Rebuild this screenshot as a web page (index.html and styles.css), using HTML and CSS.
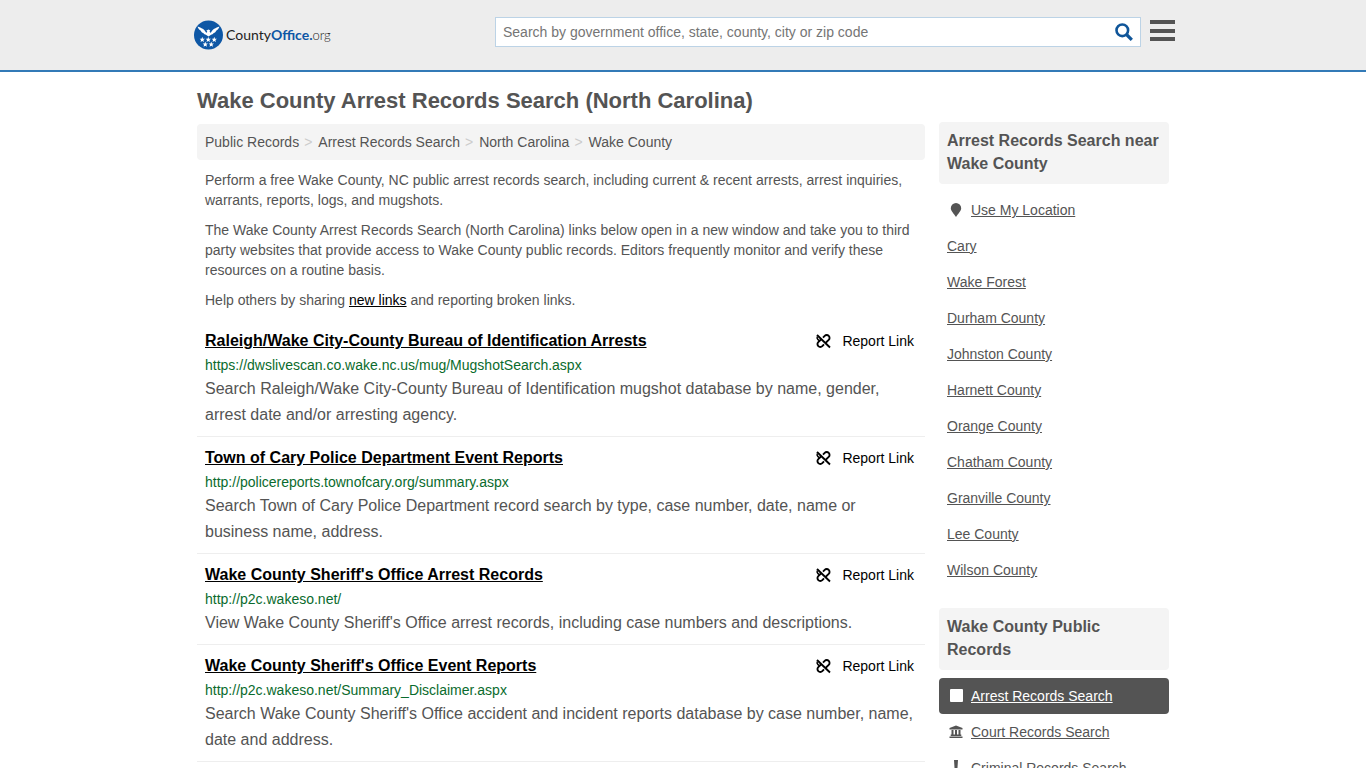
FILE: index.html
```html
<!DOCTYPE html>
<html lang="en">
<head>
<meta charset="utf-8">
<meta name="viewport" content="width=device-width, initial-scale=1">
<title>Wake County Arrest Records Search (North Carolina)</title>
<link rel="stylesheet" href="styles.css">
</head>
<body>
<svg class="sprite" aria-hidden="true">
  <symbol id="unlink" viewBox="0 0 16 16">
    <g fill="none" stroke="currentColor" stroke-width="1.900">
      <path d="M2 2 15 14.500"/>
      <path d="M8 4.600 9.700 2.900a2.800 2.800 0 0 1 4 0 2.800 2.800 0 0 1 0 4L10.500 10"/>
      <path d="M9 11.400 7.300 13.100a2.800 2.800 0 0 1-4 0 2.800 2.800 0 0 1 0-4L6.500 6"/>
      <path d="M4.600 8 3 6.600a2.700 2.700 0 0 1-.8-2.800" stroke-width="1.500"/>
    </g>
  </symbol>
  <symbol id="star" viewBox="0 0 10 10">
    <path fill="#fff" d="M5 0 6.300 3.500 10 3.700 7.100 6 8.100 9.700 5 7.600 1.900 9.700 2.900 6 0 3.700 3.700 3.500z"/>
  </symbol>
</svg>

<header class="site-header">
  <div class="header-inner">
    <a class="logo" href="#" aria-label="CountyOffice.org">
      <svg class="logo-mark" viewBox="0 0 30 30" aria-hidden="true">
        <circle cx="14.500" cy="15" r="14.500" fill="#0e57a5"/>
        <path fill="#fff" d="M3.500 6.500C7.500 8 10.500 9 12.300 13l1-1.700-1.100-.6 2.200-1.300 1.800.9-.7 1 1.200 1.700C18.500 9 21.500 8 25.500 6.500c-.8 2.200-2 3.500-3.300 4.200-.4 1.200-1.300 2-2.500 2.400-.7 1-1.600 1.500-2.600 1.700L14.500 16.500l-2.600-1.700c-1-.2-1.900-.7-2.600-1.700-1.200-.4-2.100-1.200-2.500-2.400C5.500 10 4.300 8.700 3.500 6.500z"/>
        <use href="#star" x="5.500" y="16.700" width="5.500" height="5.500"/>
        <use href="#star" x="11.500" y="16.700" width="5.500" height="5.500"/>
        <use href="#star" x="17.500" y="16.700" width="5.500" height="5.500"/>
        <use href="#star" x="8.500" y="21.500" width="5.500" height="5.500"/>
        <use href="#star" x="14.500" y="21.500" width="5.500" height="5.500"/>
      </svg>
      <span class="logo-text">County<b>Office.</b><span class="logo-tld">org</span></span>
    </a>
    <form class="search">
      <input class="search-input" type="text" aria-label="Search" placeholder="Search by government office, state, county, city or zip code">
      <button class="search-button" type="button" aria-label="Search">
        <svg class="search-icon" viewBox="0 0 18 18" aria-hidden="true"><g fill="none" stroke="#0f5599"><circle cx="7.300" cy="7.300" r="5.800" stroke-width="2.600"/><path d="m11.500 11.500 5.300 5.300" stroke-width="3.200"/></g></svg>
      </button>
    </form>
    <button class="menu-button" type="button" aria-label="Menu">
      <svg class="menu-icon" viewBox="0 0 26 22" aria-hidden="true"><path fill="#545454" d="M0 0h25v4H0zM0 9h25v4H0zM0 17h25v4H0z"/></svg>
    </button>
  </div>
</header>

<div class="page">
  <main class="main">
    <h1 class="page-title">Wake County Arrest Records Search (North Carolina)</h1>
    <nav class="breadcrumb" aria-label="Breadcrumb">
      <a href="#">Public Records</a><a href="#">Arrest Records Search</a><a href="#">North Carolina</a><a href="#">Wake County</a>
    </nav>
    <div class="intro">
      <p>Perform a free Wake County, NC public arrest records search, including current &amp; recent arrests, arrest inquiries, warrants, reports, logs, and mugshots.</p>
      <p>The Wake County Arrest Records Search (North Carolina) links below open in a new window and take you to third party websites that provide access to Wake County public records. Editors frequently monitor and verify these resources on a routine basis.</p>
      <p>Help others by sharing <a href="#">new links</a> and reporting broken links.</p>
    </div>
    <article class="result">
      <div class="result-head">
        <h2 class="result-title"><a href="#">Raleigh/Wake City-County Bureau of Identification Arrests</a></h2>
        <a class="report" href="#"><svg class="report-icon" aria-hidden="true"><use href="#unlink"/></svg>Report Link</a>
      </div>
      <div class="result-url">https://dwslivescan.co.wake.nc.us/mug/MugshotSearch.aspx</div>
      <p class="result-text">Search Raleigh/Wake City-County Bureau of Identification mugshot database by name, gender, arrest date and/or arresting agency.</p>
    </article>
    <article class="result">
      <div class="result-head">
        <h2 class="result-title"><a href="#">Town of Cary Police Department Event Reports</a></h2>
        <a class="report" href="#"><svg class="report-icon" aria-hidden="true"><use href="#unlink"/></svg>Report Link</a>
      </div>
      <div class="result-url">http://policereports.townofcary.org/summary.aspx</div>
      <p class="result-text">Search Town of Cary Police Department record search by type, case number, date, name or business name, address.</p>
    </article>
    <article class="result">
      <div class="result-head">
        <h2 class="result-title"><a href="#">Wake County Sheriff's Office Arrest Records</a></h2>
        <a class="report" href="#"><svg class="report-icon" aria-hidden="true"><use href="#unlink"/></svg>Report Link</a>
      </div>
      <div class="result-url">http://p2c.wakeso.net/</div>
      <p class="result-text">View Wake County Sheriff's Office arrest records, including case numbers and descriptions.</p>
    </article>
    <article class="result">
      <div class="result-head">
        <h2 class="result-title"><a href="#">Wake County Sheriff's Office Event Reports</a></h2>
        <a class="report" href="#"><svg class="report-icon" aria-hidden="true"><use href="#unlink"/></svg>Report Link</a>
      </div>
      <div class="result-url">http://p2c.wakeso.net/Summary_Disclaimer.aspx</div>
      <p class="result-text">Search Wake County Sheriff's Office accident and incident reports database by case number, name, date and address.</p>
    </article>
  </main>

  <aside class="sidebar">
    <section>
      <h2 class="side-title">Arrest Records Search near Wake County</h2>
      <ul class="side-list">
        <li><svg class="side-icon" viewBox="0 0 18 16" aria-hidden="true"><path fill="currentColor" d="M9 1a5.200 5.200 0 0 1 5.200 5.200c0 3-3 5-5.200 8.800-2.200-3.800-5.200-5.800-5.200-8.800A5.200 5.200 0 0 1 9 1z"/></svg><a href="#">Use My Location</a></li>
        <li><a href="#">Cary</a></li>
        <li><a href="#">Wake Forest</a></li>
        <li><a href="#">Durham County</a></li>
        <li><a href="#">Johnston County</a></li>
        <li><a href="#">Harnett County</a></li>
        <li><a href="#">Orange County</a></li>
        <li><a href="#">Chatham County</a></li>
        <li><a href="#">Granville County</a></li>
        <li><a href="#">Lee County</a></li>
        <li><a href="#">Wilson County</a></li>
      </ul>
    </section>
    <section>
      <h2 class="side-title">Wake County Public Records</h2>
      <ul class="side-list">
        <li class="active"><svg class="side-icon" viewBox="0 0 18 16" aria-hidden="true"><rect x="3" y="1" width="13" height="13" rx="1" fill="currentColor"/></svg><a href="#">Arrest Records Search</a></li>
        <li><svg class="side-icon" viewBox="0 0 18 16" aria-hidden="true"><path fill="currentColor" d="M9 1.500 15.500 4v1.500h-13V4zM4.500 6h2v5h-2zM8 6h2v5H8zM11.500 6h2v5h-2zM3.700 10.500h10.600V12H3.700zM2.500 12.500h13V14h-13z"/></svg><a href="#">Court Records Search</a></li>
        <li><svg class="side-icon" viewBox="0 0 18 16" aria-hidden="true"><path fill="currentColor" d="M7 0h4l-.6 9H7.600zM7.300 10.500h3.400v3H7.300z"/></svg><a href="#">Criminal Records Search</a></li>
      </ul>
    </section>
  </aside>
</div>
</body>
</html>
```
FILE: styles.css
```css
* {
  box-sizing: border-box;
}

html {
  scrollbar-width: none;
}

body {
  margin: 0;
  background: #fff;
  color: #545454;
  font: 14px/20px "Liberation Sans", Arial, sans-serif;
}

.sprite {
  display: none;
}

h1, h2, p, ul {
  margin: 0;
  padding: 0;
}

ul {
  list-style: none;
}

button {
  padding: 0;
  border: 0;
  background: none;
  cursor: pointer;
}

.site-header {
  background: #ededed;
  border-bottom: 2px solid #337ab7;
}

.header-inner {
  display: flex;
  align-items: flex-start;
  max-width: 986px;
  margin: 0 auto;
  padding: 16px 0 20px 4px;
}

.logo {
  display: flex;
  flex: 0 0 301px;
  align-items: center;
  gap: 2px;
  padding-top: 4px;
  color: #222;
  text-decoration: none;
}

.logo-mark {
  width: 30px;
  height: 30px;
}

.logo-text {
  font: 14px/20px Lato, sans-serif;
}

.logo-text b {
  color: #0e57a5;
}

.logo-tld {
  font-size: 13px;
  font-weight: 300;
}

.search {
  display: flex;
  flex: 1;
  height: 30px;
  margin-top: 1px;
  border: 1px solid #bcd3e6;
  background: #fff;
}

.search-input {
  flex: 1;
  min-width: 0;
  padding: 0 7px;
  border: 0;
  background: none;
  font: inherit;
}

.search-input::placeholder {
  color: #757575;
}

.search-button {
  width: 32px;
}

.search-icon {
  display: block;
  width: 18px;
  height: 18px;
  margin: 0 auto;
}

.menu-button {
  margin: 4px 0 0 9px;
}

.menu-icon {
  display: block;
  width: 26px;
  height: 22px;
}

.page {
  display: flex;
  gap: 14px;
  max-width: 972px;
  margin: 0 auto;
}

.main {
  flex: 1;
  min-width: 0;
}

.page-title {
  padding: 15px 0 9px;
  font-size: 22px;
  line-height: 28px;
}

.breadcrumb {
  padding: 8px;
  border-radius: 4px;
  background: #f4f4f4;
}

.breadcrumb a {
  color: inherit;
  text-decoration: none;
}

.breadcrumb a + a::before {
  content: ">";
  padding: 0 6px 0 5px;
  color: #ccc;
}

.intro {
  padding: 10px 8px;
}

.intro p + p {
  margin-top: 10px;
}

.intro a {
  color: #000;
}

.result {
  padding: 8px;
  border-bottom: 1px solid #eee;
}

.result-head {
  display: flex;
  justify-content: space-between;
  line-height: 26px;
}

.result-title {
  font-size: 16px;
}

.result-title a {
  color: #000;
}

.report {
  display: flex;
  align-items: center;
  gap: 11px;
  padding-right: 3px;
  color: #000;
  text-decoration: none;
}

.report-icon {
  width: 16px;
  height: 16px;
}

.result-url {
  color: #0a6b2d;
  line-height: 22px;
}

.result-text {
  font-size: 16px;
  line-height: 26px;
}

.sidebar {
  width: 230px;
  padding-top: 50px;
}

.side-title {
  padding: 7px 8px 9px;
  border-radius: 4px;
  background: #f4f4f4;
  font-size: 16px;
  line-height: 23px;
}

.side-list {
  padding: 8px 0 20px;
}

.side-list li {
  display: flex;
  align-items: center;
  gap: 6px;
  padding: 8px;
  border-radius: 4px;
}

.side-list a {
  color: inherit;
}

.side-list .active {
  background: #545454;
  color: #fff;
}

.side-icon {
  width: 18px;
  height: 16px;
}
```
